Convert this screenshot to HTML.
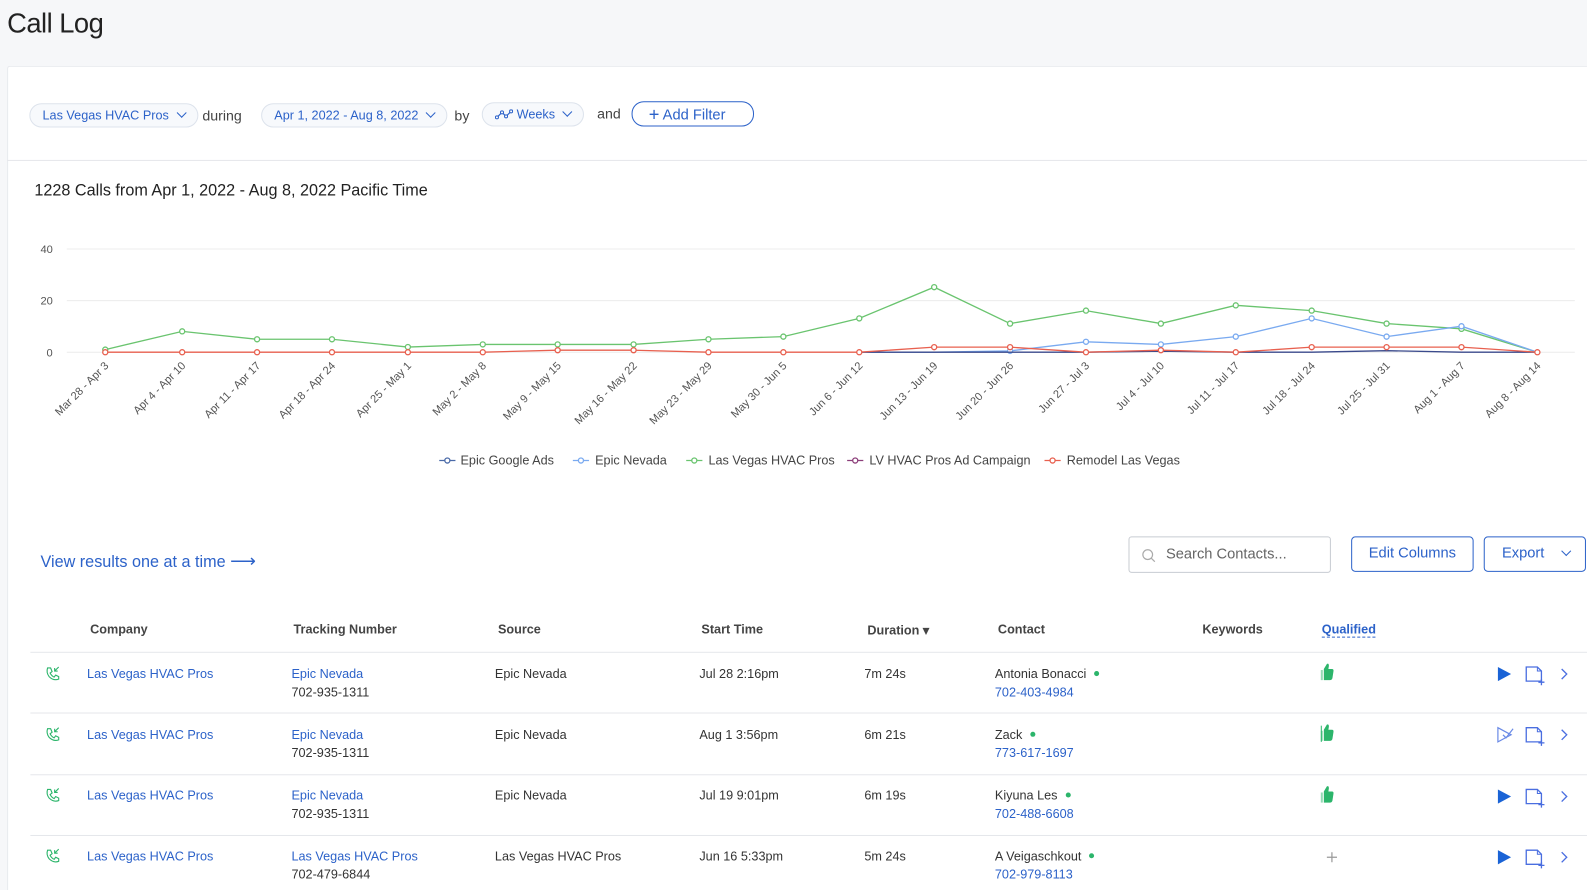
<!DOCTYPE html>
<html><head><meta charset="utf-8"><style>
*{box-sizing:border-box;margin:0;padding:0}
html,body{width:1587px;height:890px;overflow:hidden}
body{background:#f6f7f9;font-family:"Liberation Sans",sans-serif;color:#333;position:relative}
#w{position:absolute;left:0;top:0;width:1568px;height:880px;transform:scale(1.0121);transform-origin:0 0}
.a{position:absolute;white-space:nowrap}
h1{position:absolute;left:7px;top:8px;font-size:27px;font-weight:normal;color:#222;letter-spacing:-0.5px}
.card{position:absolute;left:7px;top:65px;width:1561px;height:825px;background:#fff;border:1px solid #e6e8ec;border-right:none;border-bottom:none;border-radius:3px 0 0 0}
.pill{position:absolute;height:24px;border:1px solid #dde3ec;border-radius:12px;background:#f7f9fc;color:#2c62c9;font-size:12.5px;line-height:22px;padding:0 12px}
.chev{display:inline-block;width:7px;height:7px;border-right:1.3px solid #2c62c9;border-bottom:1.3px solid #2c62c9;transform:rotate(45deg);margin-left:9px;position:relative;top:-3px}
.lbl{font-size:14px;color:#444}
.th{font-size:12.5px;font-weight:bold;color:#444}
.td{font-size:12.5px;color:#333;line-height:18px}
.lk{color:#2c62c9}
.hr{position:absolute;left:30px;width:1538px;height:1px;background:#e5e7eb}
.dot{display:inline-block;width:5px;height:5px;border-radius:50%;background:#2cb56b;margin-left:8px;position:relative;top:-2px}
.btn{position:absolute;height:35px;border:1px solid #2c62c9;border-radius:4px;color:#2c62c9;font-size:14.5px;line-height:33px;text-align:center}
</style></head><body><div id="w">
<h1>Call Log</h1>
<div class="card"></div>
<div class="hr" style="left:7px;top:158px;width:1561px"></div>

<div class="pill" style="left:29px;top:102px">Las Vegas HVAC Pros<span class="chev"></span></div>
<div class="a lbl" style="left:200px;top:106px">during</div>
<div class="pill" style="left:258px;top:102px">Apr 1, 2022 - Aug 8, 2022<span class="chev"></span></div>
<div class="a lbl" style="left:449px;top:106px">by</div>
<div class="pill" style="left:476px;top:101px"><svg width="18" height="10" style="vertical-align:-1px"><polyline points="2,8 7,3 11,7 16,2" fill="none" stroke="#2c62c9" stroke-width="1.2"/><circle cx="2" cy="8" r="1.5" fill="#fff" stroke="#2c62c9"/><circle cx="7" cy="3" r="1.5" fill="#fff" stroke="#2c62c9"/><circle cx="11" cy="7" r="1.5" fill="#fff" stroke="#2c62c9"/><circle cx="16" cy="2" r="1.5" fill="#fff" stroke="#2c62c9"/></svg> Weeks<span class="chev"></span></div>
<div class="a lbl" style="left:590px;top:104px">and</div>
<div class="pill" style="left:624px;top:100px;height:25px;width:121px;border-color:#2c62c9;background:#fff;font-size:14.5px;padding:0 16px"><span style="font-size:18px;position:relative;top:1px">+</span> Add Filter</div>

<div class="a" style="left:34px;top:180px;font-size:16px;color:#222">1228 Calls from Apr 1, 2022 - Aug 8, 2022 Pacific Time</div>

<svg class="a" style="left:0;top:0" width="1568" height="480" font-family="Liberation Sans, sans-serif">
<g stroke="#ececec" stroke-width="1"><line x1="66" y1="246" x2="1556" y2="246"/><line x1="66" y1="297" x2="1556" y2="297"/><line x1="66" y1="348" x2="1556" y2="348"/></g>
<g font-size="11" fill="#555"><text x="40" y="250">40</text><text x="40" y="301">20</text><text x="46" y="352">0</text></g>
<g font-size="11" fill="#555" text-anchor="end">
<text transform="translate(108,362) rotate(-45)">Mar 28 - Apr 3</text>
<text transform="translate(184,362) rotate(-45)">Apr 4 - Apr 10</text>
<text transform="translate(258,362) rotate(-45)">Apr 11 - Apr 17</text>
<text transform="translate(332,362) rotate(-45)">Apr 18 - Apr 24</text>
<text transform="translate(407,362) rotate(-45)">Apr 25 - May 1</text>
<text transform="translate(481,362) rotate(-45)">May 2 - May 8</text>
<text transform="translate(555,362) rotate(-45)">May 9 - May 15</text>
<text transform="translate(630,362) rotate(-45)">May 16 - May 22</text>
<text transform="translate(704,362) rotate(-45)">May 23 - May 29</text>
<text transform="translate(778,362) rotate(-45)">May 30 - Jun 5</text>
<text transform="translate(853,362) rotate(-45)">Jun 6 - Jun 12</text>
<text transform="translate(927,362) rotate(-45)">Jun 13 - Jun 19</text>
<text transform="translate(1002,362) rotate(-45)">Jun 20 - Jun 26</text>
<text transform="translate(1077,362) rotate(-45)">Jun 27 - Jul 3</text>
<text transform="translate(1151,362) rotate(-45)">Jul 4 - Jul 10</text>
<text transform="translate(1225,362) rotate(-45)">Jul 11 - Jul 17</text>
<text transform="translate(1300,362) rotate(-45)">Jul 18 - Jul 24</text>
<text transform="translate(1374,362) rotate(-45)">Jul 25 - Jul 31</text>
<text transform="translate(1448,362) rotate(-45)">Aug 1 - Aug 7</text>
<text transform="translate(1523,362) rotate(-45)">Aug 8 - Aug 14</text>
</g>
<g fill="#fff" stroke-width="1.3">
<polyline stroke="#6ac46f" fill="none" points="104,345.4 180,327.4 254,335.2 328,335.2 403,342.9 477,340.3 551,340.3 626,340.3 700,335.2 774,332.6 849,314.6 923,283.7 998,319.7 1073,306.9 1147,319.7 1221,301.7 1296,306.9 1370,319.7 1444,324.9 1519,348"/>
<g stroke="#6ac46f"><circle cx="104" cy="345.4" r="2.5"/><circle cx="180" cy="327.4" r="2.5"/><circle cx="254" cy="335.2" r="2.5"/><circle cx="328" cy="335.2" r="2.5"/><circle cx="403" cy="342.9" r="2.5"/><circle cx="477" cy="340.3" r="2.5"/><circle cx="551" cy="340.3" r="2.5"/><circle cx="626" cy="340.3" r="2.5"/><circle cx="700" cy="335.2" r="2.5"/><circle cx="774" cy="332.6" r="2.5"/><circle cx="849" cy="314.6" r="2.5"/><circle cx="923" cy="283.7" r="2.5"/><circle cx="998" cy="319.7" r="2.5"/><circle cx="1073" cy="306.9" r="2.5"/><circle cx="1147" cy="319.7" r="2.5"/><circle cx="1221" cy="301.7" r="2.5"/><circle cx="1296" cy="306.9" r="2.5"/><circle cx="1370" cy="319.7" r="2.5"/><circle cx="1444" cy="324.9" r="2.5"/></g>
<polyline stroke="#7aaaf0" fill="none" points="849,348 923,348 998,346.7 1073,337.7 1147,340.3 1221,332.6 1296,314.6 1370,332.6 1444,322.3 1519,348"/>
<g stroke="#7aaaf0"><circle cx="998" cy="346.7" r="2.5"/><circle cx="1073" cy="337.7" r="2.5"/><circle cx="1147" cy="340.3" r="2.5"/><circle cx="1221" cy="332.6" r="2.5"/><circle cx="1296" cy="314.6" r="2.5"/><circle cx="1370" cy="332.6" r="2.5"/><circle cx="1444" cy="322.3" r="2.5"/></g>
<polyline stroke="#3b4a8c" fill="none" points="849,348 923,348 998,348 1073,348 1147,347 1221,348 1296,348 1370,346.5 1444,348 1519,348"/>
<polyline stroke="#e8604f" fill="none" points="104,348 180,348 254,348 328,348 403,348 477,348 551,346 626,346 700,348 774,348 849,348 923,343 998,343 1073,348 1147,346 1221,348 1296,343 1370,343 1444,343 1519,348"/>
<g stroke="#e8604f"><circle cx="104" cy="348" r="2.5"/><circle cx="180" cy="348" r="2.5"/><circle cx="254" cy="348" r="2.5"/><circle cx="328" cy="348" r="2.5"/><circle cx="403" cy="348" r="2.5"/><circle cx="477" cy="348" r="2.5"/><circle cx="551" cy="346" r="2.5"/><circle cx="626" cy="346" r="2.5"/><circle cx="700" cy="348" r="2.5"/><circle cx="774" cy="348" r="2.5"/><circle cx="849" cy="348" r="2.5"/><circle cx="923" cy="343" r="2.5"/><circle cx="998" cy="343" r="2.5"/><circle cx="1073" cy="348" r="2.5"/><circle cx="1147" cy="346" r="2.5"/><circle cx="1221" cy="348" r="2.5"/><circle cx="1296" cy="343" r="2.5"/><circle cx="1370" cy="343" r="2.5"/><circle cx="1444" cy="343" r="2.5"/><circle cx="1519" cy="348" r="2.5"/></g>
</g>
<g font-size="12.5" fill="#444" stroke-width="1.3">
<line x1="434" y1="455" x2="450" y2="455" stroke="#4a6aa8"/><circle cx="442" cy="455" r="2.5" fill="#fff" stroke="#4a6aa8"/><text x="455" y="459">Epic Google Ads</text>
<line x1="566" y1="455" x2="582" y2="455" stroke="#7aaaf0"/><circle cx="574" cy="455" r="2.5" fill="#fff" stroke="#7aaaf0"/><text x="588" y="459">Epic Nevada</text>
<line x1="678" y1="455" x2="694" y2="455" stroke="#6ac46f"/><circle cx="686" cy="455" r="2.5" fill="#fff" stroke="#6ac46f"/><text x="700" y="459">Las Vegas HVAC Pros</text>
<line x1="837" y1="455" x2="853" y2="455" stroke="#8c3f7a"/><circle cx="845" cy="455" r="2.5" fill="#fff" stroke="#8c3f7a"/><text x="859" y="459">LV HVAC Pros Ad Campaign</text>
<line x1="1032" y1="455" x2="1048" y2="455" stroke="#e8604f"/><circle cx="1040" cy="455" r="2.5" fill="#fff" stroke="#e8604f"/><text x="1054" y="459">Remodel Las Vegas</text>
</g>
</svg>

<div class="a" style="left:40px;top:544px;font-size:16px;color:#2c62c9">View results one at a time <span style="font-size:18px">⟶</span></div>
<div class="a" style="left:1115px;top:530px;width:200px;height:36px;border:1px solid #c8ccd2;border-radius:3px;font-size:14.5px;color:#666;line-height:34px;padding-left:36px">Search Contacts...<svg style="position:absolute;left:12px;top:11px" width="14" height="14"><circle cx="6" cy="6" r="4.8" fill="none" stroke="#aaa" stroke-width="1.2"/><line x1="9.5" y1="9.5" x2="13" y2="13" stroke="#aaa" stroke-width="1.2"/></svg></div>
<div class="btn" style="left:1335px;top:530px;width:121px">Edit Columns</div>
<div class="btn" style="left:1466px;top:530px;width:101px;text-align:left;padding-left:17px">Export<span class="chev" style="margin-left:18px"></span></div>

<div class="a th" style="left:89px;top:615px">Company</div>
<div class="a th" style="left:290px;top:615px">Tracking Number</div>
<div class="a th" style="left:492px;top:615px">Source</div>
<div class="a th" style="left:693px;top:615px">Start Time</div>
<div class="a th" style="left:857px;top:615px">Duration ▾</div>
<div class="a th" style="left:986px;top:615px">Contact</div>
<div class="a th" style="left:1188px;top:615px">Keywords</div>
<div class="a th" style="left:1306px;top:615px;color:#2c62c9;border-bottom:1px dashed #2c62c9">Qualified</div>
<div class="hr" style="top:644px"></div>
<div class="hr" style="top:704px"></div>
<div class="hr" style="top:765px"></div>
<div class="hr" style="top:825px"></div>

<div style="position:absolute;left:0;top:657px;width:1568px">
<svg class="a" style="left:44px;top:1px" width="16" height="16"><path d="M3 2 L6 2 L7.5 5.5 L5.5 7 Q7 10 9.5 11 L11 9 L14 10.5 L14 13 Q9 15 4.5 10.5 Q1.5 6.5 3 2Z" fill="none" stroke="#2cb56b" stroke-width="1.1"/><path d="M14 1 L10 5 M10 2 L10 5 L13 5" fill="none" stroke="#2cb56b" stroke-width="1.1"/></svg>
<div class="a td lk" style="left:86px;top:0">Las Vegas HVAC Pros</div>
<div class="a td" style="left:288px;top:0"><span class="lk">Epic Nevada</span><br>702-935-1311</div>
<div class="a td" style="left:489px;top:0">Epic Nevada</div>
<div class="a td" style="left:691px;top:0">Jul 28 2:16pm</div>
<div class="a td" style="left:854px;top:0">7m 24s</div>
<div class="a td" style="left:983px;top:0">Antonia Bonacci<span class="dot"></span><br><span class="lk">702-403-4984</span></div>
</div>
<div style="position:absolute;left:0;top:717px;width:1568px">
<svg class="a" style="left:44px;top:1px" width="16" height="16"><path d="M3 2 L6 2 L7.5 5.5 L5.5 7 Q7 10 9.5 11 L11 9 L14 10.5 L14 13 Q9 15 4.5 10.5 Q1.5 6.5 3 2Z" fill="none" stroke="#2cb56b" stroke-width="1.1"/><path d="M14 1 L10 5 M10 2 L10 5 L13 5" fill="none" stroke="#2cb56b" stroke-width="1.1"/></svg>
<div class="a td lk" style="left:86px;top:0">Las Vegas HVAC Pros</div>
<div class="a td" style="left:288px;top:0"><span class="lk">Epic Nevada</span><br>702-935-1311</div>
<div class="a td" style="left:489px;top:0">Epic Nevada</div>
<div class="a td" style="left:691px;top:0">Aug 1 3:56pm</div>
<div class="a td" style="left:854px;top:0">6m 21s</div>
<div class="a td" style="left:983px;top:0">Zack<span class="dot"></span><br><span class="lk">773-617-1697</span></div>
</div>
<div style="position:absolute;left:0;top:777px;width:1568px">
<svg class="a" style="left:44px;top:1px" width="16" height="16"><path d="M3 2 L6 2 L7.5 5.5 L5.5 7 Q7 10 9.5 11 L11 9 L14 10.5 L14 13 Q9 15 4.5 10.5 Q1.5 6.5 3 2Z" fill="none" stroke="#2cb56b" stroke-width="1.1"/><path d="M14 1 L10 5 M10 2 L10 5 L13 5" fill="none" stroke="#2cb56b" stroke-width="1.1"/></svg>
<div class="a td lk" style="left:86px;top:0">Las Vegas HVAC Pros</div>
<div class="a td" style="left:288px;top:0"><span class="lk">Epic Nevada</span><br>702-935-1311</div>
<div class="a td" style="left:489px;top:0">Epic Nevada</div>
<div class="a td" style="left:691px;top:0">Jul 19 9:01pm</div>
<div class="a td" style="left:854px;top:0">6m 19s</div>
<div class="a td" style="left:983px;top:0">Kiyuna Les<span class="dot"></span><br><span class="lk">702-488-6608</span></div>
</div>
<div style="position:absolute;left:0;top:837px;width:1568px">
<svg class="a" style="left:44px;top:1px" width="16" height="16"><path d="M3 2 L6 2 L7.5 5.5 L5.5 7 Q7 10 9.5 11 L11 9 L14 10.5 L14 13 Q9 15 4.5 10.5 Q1.5 6.5 3 2Z" fill="none" stroke="#2cb56b" stroke-width="1.1"/><path d="M14 1 L10 5 M10 2 L10 5 L13 5" fill="none" stroke="#2cb56b" stroke-width="1.1"/></svg>
<div class="a td lk" style="left:86px;top:0">Las Vegas HVAC Pros</div>
<div class="a td" style="left:288px;top:0"><span class="lk">Las Vegas HVAC Pros</span><br>702-479-6844</div>
<div class="a td" style="left:489px;top:0">Las Vegas HVAC Pros</div>
<div class="a td" style="left:691px;top:0">Jun 16 5:33pm</div>
<div class="a td" style="left:854px;top:0">5m 24s</div>
<div class="a td" style="left:983px;top:0">A Veigaschkout<span class="dot"></span><br><span class="lk">702-979-8113</span></div>
</div>

<svg class="a" style="left:1300px;top:655px" width="268" height="210">
<defs>
<g id="th"><path d="M8 6 L11 1 Q13 0 13 3 L12.5 6 L16 6 Q18 6 17.5 8.5 L16.5 15 Q16 17 14 17 L8 17 Z" fill="#2cb56b"/><rect x="5" y="7" width="2" height="10" fill="#2cb56b" opacity="0.5"/></g>
<g id="act">
<path d="M180 4 L193 11 L180 18 Z" fill="#1a63d6"/>
<path d="M208 4 L219 4 L223 8 L223 18 L208 18 Z" fill="none" stroke="#4a6ee0" stroke-width="1.3"/>
<path d="M219 4 L219 8 L223 8" fill="none" stroke="#4a6ee0" stroke-width="1"/>
<path d="M223 16 L223 22 M220 19 L226 19" stroke="#4a6ee0" stroke-width="1.3"/>
<path d="M243 6 L248 11 L243 16" fill="none" stroke="#4a6ee0" stroke-width="1.3"/>
</g>
</defs>
<use href="#th"/>
<use href="#act"/>
<g transform="translate(0,60)"><use href="#th"/><rect x="5" y="2" width="1" height="16" fill="#2cb56b"/>
<path d="M180 4 L193 11 L180 18 Z" fill="none" stroke="#6a8ae6" stroke-width="1.2"/><path d="M185 11 L188 14 L195 5" fill="none" stroke="#6a8ae6" stroke-width="1.2"/>
<path d="M208 4 L219 4 L223 8 L223 18 L208 18 Z" fill="none" stroke="#4a6ee0" stroke-width="1.3"/><path d="M219 4 L219 8 L223 8" fill="none" stroke="#4a6ee0"/><path d="M223 16 L223 22 M220 19 L226 19" stroke="#4a6ee0" stroke-width="1.3"/><path d="M243 6 L248 11 L243 16" fill="none" stroke="#4a6ee0" stroke-width="1.3"/></g>
<g transform="translate(0,121)"><use href="#th"/><use href="#act"/></g>
<g transform="translate(0,181)"><path d="M16 6 L16 16 M11 11 L21 11" stroke="#999" stroke-width="1.2"/><use href="#act"/></g>
</svg>
</div></body></html>
